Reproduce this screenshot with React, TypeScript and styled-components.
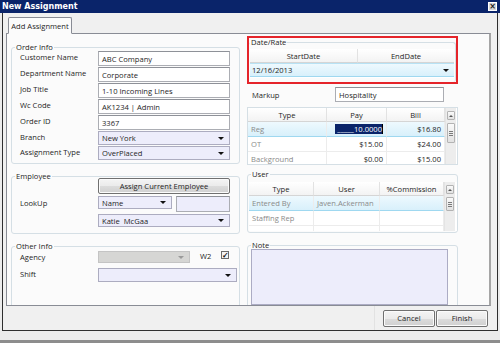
import React from 'react'
import styled, { createGlobalStyle } from 'styled-components'

const GlobalStyle = createGlobalStyle`
  html, body { margin: 0; padding: 0; }
  body {
    font-family: "Open Sans", "Noto Sans", "Liberation Sans", sans-serif;
    font-size: 7.6px;
    color: #1e1e1e;
  }
  * { box-sizing: border-box; }
`

const Screen = styled.div`
  width: 500px;
  height: 343px;
  display: flex;
  flex-direction: column;
  background: #ececec;
  overflow: hidden;
`
const TitleBar = styled.div`
  height: 13px;
  flex: none;
  display: flex;
  align-items: center;
  justify-content: space-between;
  background: #0a246a;
  color: #fff;
  font-family: "DejaVu Sans", "Liberation Sans", sans-serif;
  font-weight: bold;
  font-size: 8px;
  padding: 0 3px 0 2px;
`
const CloseBox = styled.div`
  width: 9px;
  height: 9px;
  background: #d8d8d8;
  border: 1px solid #fff;
  color: #222;
  font-size: 8px;
  line-height: 7px;
  text-align: center;
`
const Body = styled.div`
  height: 318px;
  width: 496px;
  margin-left: 2px;
  display: flex;
  flex-direction: column;
  background: #f0f0f0;
  border: 1px solid #2e2e2e;
  border-top: none;
`
const TabStrip = styled.div`
  height: 20px;
  flex: none;
  display: flex;
  align-items: flex-end;
  padding-left: 5px;
`
const Tab = styled.div`
  width: 64px;
  height: 17px;
  margin-bottom: -1px;
  position: relative;
  z-index: 1;
  border: 1px solid #898c95;
  border-bottom: 1px solid #fbfbfb;
  border-radius: 2px 2px 0 0;
  background: #fbfbfb;
  display: flex;
  align-items: center;
  justify-content: center;
`
const Panel = styled.div`
  height: 273px;
  flex: none;
  margin: 0 6px 0 3px;
  border: 1px solid #898c95;
  border-right: 2px solid #a5a5a5;
  background: #fbfbfb;
  overflow: hidden;
  display: flex;
  align-items: flex-start;
  gap: 7px;
  padding-left: 4px;
`
const Column = styled.div<{ $w: number; $top: number }>`
  width: ${p => p.$w}px;
  flex: none;
  padding-top: ${p => p.$top}px;
  display: flex;
  flex-direction: column;
  gap: ${p => (p.$w > 220 ? 8 : 3)}px;
`
const Group = styled.fieldset<{ $pad: string; $h?: number }>`
  margin: 0;
  min-width: 0;
  padding: ${p => p.$pad};
  border: 1px solid #d5dfe5;
  border-radius: 3px;
  ${p => (p.$h ? `height: ${p.$h}px;` : '')}
`
const Legend = styled.legend<{ $ml?: number }>`
  padding: 0 1px;
  margin-left: ${p => p.$ml ?? -5}px;
  font-size: 7.6px;
  line-height: 8px;
`
const FormGrid = styled.div<{ $mt?: number }>`
  display: grid;
  grid-template-columns: 78px 1fr;
  row-gap: 1px;
  margin-top: ${p => p.$mt ?? 0}px;
  align-items: center;
`
const Label = styled.div<{ $span?: number }>`
  padding-top: 1px;
  align-self: start;
  ${p => (p.$span ? `grid-row: span ${p.$span}; align-self: center;` : '')}
`
const TextBox = styled.div<{ $h?: number; $w?: number; $lav?: boolean }>`
  height: ${p => p.$h ?? 15}px;
  ${p => (p.$w ? `width: ${p.$w}px;` : '')}
  border: 1px solid #abadb3;
  border-top-color: #8e9198;
  background: ${p => (p.$lav ? '#ededfb' : '#fff')};
  display: flex;
  align-items: center;
  padding-left: 3px;
  white-space: nowrap;
`
const Combo = styled.div<{ $h?: number; $w?: number; $off?: boolean; $mr?: number }>`
  height: ${p => p.$h ?? 14}px;
  ${p => (p.$w ? `width: ${p.$w}px;` : '')}
  ${p => (p.$mr ? `margin-right: ${p.$mr}px;` : '')}
  border: 1px solid ${p => (p.$off ? '#c4c4c4' : '#acacc0')};
  background: ${p => (p.$off ? '#d6d6d4' : '#ededfb')};
  display: flex;
  align-items: center;
  justify-content: space-between;
  padding: 0 5px 0 3px;
  white-space: nowrap;
`
const Arrow = styled.span<{ $off?: boolean }>`
  width: 0;
  height: 0;
  flex: none;
  border-left: 3px solid transparent;
  border-right: 3px solid transparent;
  border-top: 3px solid ${p => (p.$off ? '#9a9a9a' : '#111')};
`
const Button = styled.div<{ $w?: number; $h?: number }>`
  height: ${p => p.$h ?? 16}px;
  ${p => (p.$w ? `width: ${p.$w}px;` : '')}
  border: 1px solid #707070;
  border-radius: 2px;
  background: linear-gradient(#f4f4f4, #ebebeb 50%, #dcdcdc 51%, #d0d0d0);
  box-shadow: inset 0 0 0 1px #fbfbfb;
  display: flex;
  align-items: center;
  justify-content: center;
`
const Stack = styled.div<{ $gap: number }>`
  display: flex;
  flex-direction: column;
  gap: ${p => p.$gap}px;
`
const Row = styled.div<{ $gap: number }>`
  display: flex;
  align-items: flex-start;
  gap: ${p => p.$gap}px;
`
const Check = styled.div`
  width: 8px;
  height: 8px;
  border: 1px solid #6a6a6a;
  background: #f4f4f4;
  font-size: 8px;
  line-height: 6px;
  text-align: center;
  color: #111;
  font-weight: bold;
`
const RedMark = styled.div`
  border: 2px solid #e5242a;
  height: 48px;
`
const Table = styled.div<{ $cols: string; $h: number; $edge?: boolean }>`
  display: grid;
  grid-template-columns: ${p => p.$cols};
  grid-auto-rows: 15px;
  grid-template-rows: 14px;
  height: ${p => p.$h}px;
  overflow: hidden;
  border: ${p => (p.$edge ? '1px solid #d5dfe5' : 'none')};
  background: #fff;
`
const Head = styled.div`
  display: flex;
  align-items: center;
  justify-content: center;
  background: linear-gradient(#ffffff, #f3f3f3);
  border-right: 1px solid #e2e2e2;
  border-bottom: 1px solid #d5d5d5;
`
const Cell = styled.div<{ $sel?: boolean; $right?: boolean; $dim?: boolean }>`
  display: flex;
  align-items: center;
  justify-content: ${p => (p.$right ? 'flex-end' : 'flex-start')};
  padding: 0 3px;
  white-space: nowrap;
  overflow: hidden;
  color: ${p => (p.$dim ? '#8a8a8a' : '#1e1e1e')};
  border-right: 1px solid #ececec;
  border-bottom: 1px solid ${p => (p.$sel ? '#9fd8f0' : '#ececec')};
  background: ${p => (p.$sel ? 'linear-gradient(#eef9fe, #d8f0fb)' : '#fff')};
`
const Selection = styled.span`
  background: #0a246a;
  color: #fff;
  padding: 0 0 0 2px;
  line-height: 10px;
  border-right: 1px solid #000;
`
const ScrollBar = styled.div`
  grid-column: -2 / -1;
  grid-row: 1 / span 10;
  display: flex;
  flex-direction: column;
  justify-content: space-between;
  background: #ededed;
  border-left: 1px solid #e4e4e4;
  padding: 3px 1px;
`
const ScrollBtn = styled.div`
  height: 9px;
  border: 1px solid #b3b3b3;
  border-radius: 1px;
  background: linear-gradient(#fafafa, #e2e2e2);
  display: flex;
  align-items: center;
  justify-content: center;
`
const Thumb = styled(ScrollBtn)<{ $h: number }>`
  height: ${p => p.$h}px;
  flex-direction: column;
  gap: 1px;
  margin-bottom: auto;
  margin-top: 3px;
`
const Grip = styled.span`
  width: 4px;
  height: 1px;
  background: #7a7a7a;
`
const UpArrow = styled.span`
  border-left: 2px solid transparent;
  border-right: 2px solid transparent;
  border-bottom: 2px solid #555;
`
const DownArrow = styled.span`
  border-left: 2px solid transparent;
  border-right: 2px solid transparent;
  border-top: 2px solid #555;
`
const DateRow = styled.div`
  grid-column: 1 / -1;
  display: flex;
  align-items: center;
  justify-content: space-between;
  padding: 0 5px 0 2px;
  background: linear-gradient(#eef9fe, #d8f0fb);
  border-top: 1px solid #b8e2f4;
  border-bottom: 1px solid #9fd8f0;
`
const MarkupRow = styled.div`
  display: flex;
  align-items: center;
  justify-content: space-between;
  padding: 0 14px 0 5px;
`
const NoteBox = styled.div`
  height: 56px;
  width: 197px;
  margin-left: 2px;
  background: #ededfb;
  border: 1px solid #acacc4;
`
const Footer = styled.div`
  flex: 1;
  display: flex;
  align-items: center;
  justify-content: flex-end;
  padding-right: 9px;
  gap: 1px;
`
const FootSep = styled.div`
  width: 1px;
  align-self: stretch;
  background: #e2e2e2;
  margin-right: 7px;
`
const BottomStrip = styled.div`
  flex: 1;
  border-bottom: 3px solid #8d8d8d;
  background: #ebebeb;
`

const Scroll = ({ thumb }: { thumb: number }) => (
  <ScrollBar>
    <ScrollBtn><UpArrow /></ScrollBtn>
    <Thumb $h={thumb}><Grip /><Grip /><Grip /></Thumb>
    <ScrollBtn><DownArrow /></ScrollBtn>
  </ScrollBar>
)

const orderRows: [string, string, boolean][] = [
  ['Customer Name', 'ABC Company', false],
  ['Department Name', 'Corporate', false],
  ['Job Title', '1-10 Incoming Lines', false],
  ['Wc Code', 'AK1234 | Admin', false],
  ['Order ID', '3367', false],
  ['Branch', 'New York', true],
  ['Assignment Type', 'OverPlaced', true],
]

const rates = [
  { type: 'Reg', pay: '10.0000', bill: '$16.80', sel: true },
  { type: 'OT', pay: '$15.00', bill: '$24.00', sel: false },
  { type: 'Background', pay: '$0.00', bill: '$15.00', sel: false },
]

const users = [
  { type: 'Entered By', user: 'Javen.Ackerman', sel: true },
  { type: 'Staffing Rep', user: '', sel: false },
  { type: '', user: '', sel: false },
]

export default function App() {
  return (
    <Screen>
      <GlobalStyle />
      <TitleBar>
        <span>New Assignment</span>
        <CloseBox>×</CloseBox>
      </TitleBar>
      <Body>
        <TabStrip>
          <Tab>Add Assignment</Tab>
        </TabStrip>
        <Panel>
          <Column $w={229} $top={9}>
            <Group $pad="0 9px 3px 8px">
              <Legend>Order Info</Legend>
              <FormGrid>
                {orderRows.map(([label, value, combo]) => (
                  <React.Fragment key={label}>
                    <Label>{label}</Label>
                    {combo ? (
                      <Combo>{value}<Arrow /></Combo>
                    ) : (
                      <TextBox>{value}</TextBox>
                    )}
                  </React.Fragment>
                ))}
              </FormGrid>
            </Group>
            <Group $pad="0 9px 6px 8px">
              <Legend>Employee</Legend>
              <FormGrid $mt={-2}>
                <Label $span={1}>LookUp</Label>
                <Stack $gap={2}>
                  <Button>Assign Current Employee</Button>
                  <Row $gap={4}>
                    <Combo $w={74} $h={13}>Name<Arrow /></Combo>
                    <TextBox $w={54} $h={16} $lav />
                  </Row>
                  <Combo $h={13}>Katie&nbsp; McGaa<Arrow /></Combo>
                </Stack>
              </FormGrid>
            </Group>
            <Group $pad="0 9px 3px 8px" $h={80}>
              <Legend>Other Info</Legend>
              <FormGrid $mt={1}>
                <Label>Agency</Label>
                <Row $gap={10}>
                  <Combo $w={92} $h={12} $off><span /><Arrow $off /></Combo>
                  <span>W2</span>
                  <Check>✓</Check>
                </Row>
                <Label style={{ marginTop: 4 }}>Shift</Label>
                <Combo $h={14} $mr={-7} style={{ marginTop: 4 }}>
                  <span /><Arrow />
                </Combo>
              </FormGrid>
            </Group>
          </Column>
          <Column $w={211} $top={2}>
            <RedMark>
              <Group $pad="3px 1px 1px 1px" style={{ height: 44, borderLeft: 'none', borderBottom: 'none' }}>
                <Legend $ml={0}>Date/Rate</Legend>
                <Table $cols="108px 1fr" $h={29} style={{ gridAutoRows: '14px' }}>
                  <Head>StartDate</Head>
                  <Head style={{ borderRight: 'none' }}>EndDate</Head>
                  <DateRow>12/16/2013<Arrow /></DateRow>
                </Table>
              </Group>
            </RedMark>
            <MarkupRow>
              <span>Markup</span>
              <TextBox $w={109} $h={15}>Hospitality</TextBox>
            </MarkupRow>
            <Table $cols="79px 60px 58px 11px" $h={58} $edge style={{ marginTop: 2 }}>
              <Head>Type</Head>
              <Head>Pay</Head>
              <Head>Bill</Head>
              <Scroll thumb={20} />
              {rates.map(r => (
                <React.Fragment key={r.type}>
                  <Cell $sel={r.sel} $dim>{r.type}</Cell>
                  <Cell $sel={r.sel} $right>
                    {r.sel ? <Selection>_____{r.pay}</Selection> : r.pay}
                  </Cell>
                  <Cell $sel={r.sel} $right>{r.bill}</Cell>
                </React.Fragment>
              ))}
            </Table>
            <Group $pad="0 0 1px 1px" style={{ marginTop: 2 }}>
              <Legend $ml={2}>User</Legend>
              <Table $cols="65px 66px 64px 11px" $h={49} style={{ marginTop: 4 }}>
                <Head>Type</Head>
                <Head>User</Head>
                <Head>%Commission</Head>
                <Scroll thumb={14} />
                {users.map((u, i) => (
                  <React.Fragment key={i}>
                    <Cell $sel={u.sel} $dim>{u.type}</Cell>
                    <Cell $sel={u.sel} $dim>{u.user}</Cell>
                    <Cell $sel={u.sel} />
                  </React.Fragment>
                ))}
              </Table>
            </Group>
            <Group $pad="0 0 1px 1px" $h={80} style={{ marginTop: 5 }}>
              <Legend $ml={2}>Note</Legend>
              <NoteBox />
            </Group>
          </Column>
        </Panel>
        <Footer>
          <FootSep />
          <Button $w={52} $h={17}>Cancel</Button>
          <Button $w={52} $h={17}>Finish</Button>
        </Footer>
      </Body>
      <BottomStrip />
    </Screen>
  )
}
